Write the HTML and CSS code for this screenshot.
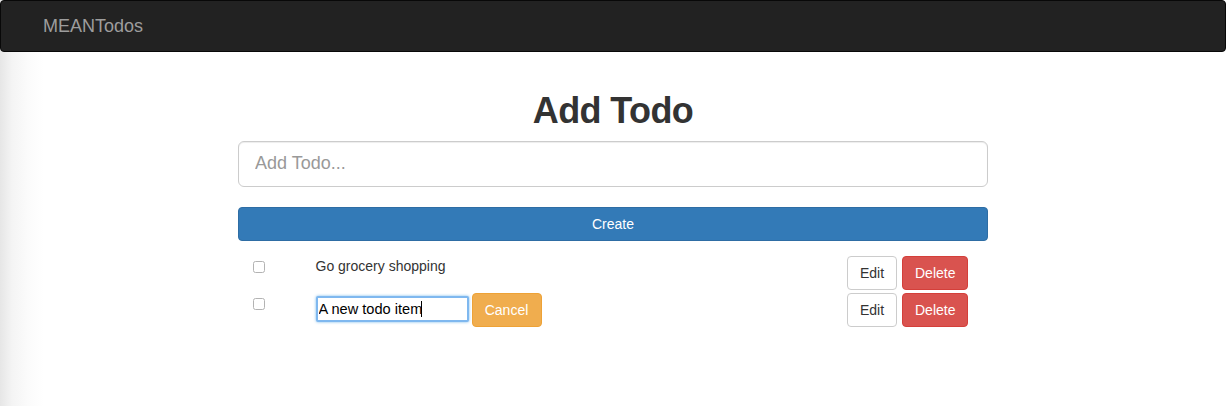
FILE: index.html
```html
<!DOCTYPE html>
<html lang="en">
<head>
<meta charset="utf-8">
<title>MEANTodos</title>
<link rel="stylesheet" href="styles.css">
</head>
<body>
<nav class="navbar">
  <a class="brand" href="#">MEANTodos</a>
</nav>
<main class="container">
  <h1 class="title">Add Todo</h1>
  <input class="input-lg" type="text" placeholder="Add Todo...">
  <button class="btn btn-primary btn-block">Create</button>
  <div class="todos">
    <div class="todo-row">
      <div class="col-check"><input class="check" type="checkbox"></div>
      <div class="col-text"><span class="todo-text">Go grocery shopping</span></div>
      <div class="col-actions">
        <button class="btn btn-default">Edit</button>
        <button class="btn btn-danger">Delete</button>
      </div>
    </div>
    <div class="todo-row">
      <div class="col-check"><input class="check" type="checkbox"></div>
      <div class="col-text">
        <span class="edit-wrap"><input class="edit-input" type="text" value="A new todo item"><span class="caret"></span></span>
        <button class="btn btn-warning">Cancel</button>
      </div>
      <div class="col-actions">
        <button class="btn btn-default">Edit</button>
        <button class="btn btn-danger">Delete</button>
      </div>
    </div>
  </div>
</main>
</body>
</html>
```

FILE: styles.css
```css
* { box-sizing: border-box; }

html, body { height: 100%; }

body {
  margin: 0;
  font-family: "Liberation Sans", Arial, sans-serif;
  font-size: 14px;
  line-height: 20px;
  color: #333;
  background: linear-gradient(to right, #e6e6e6 0px, #f4f4f4 12px, #fbfbfb 28px, #ffffff 44px);
}

.navbar {
  width: calc(100% - 1px);
  height: 52px;
  background: #222;
  border: 1px solid #080808;
  border-radius: 4px;
  display: flex;
  align-items: center;
}

.brand {
  padding-left: 42px;
  font-size: 18px;
  line-height: 50px;
  color: #9d9d9d;
  text-decoration: none;
}

.container {
  width: 751px;
  padding-right: 1px;
  margin: 0 auto;
}

.title {
  margin: 39px 0 10px;
  font-size: 36px;
  line-height: 39.6px;
  font-weight: 700;
  letter-spacing: -0.6px;
  text-align: center;
  color: #333;
}

.input-lg {
  display: block;
  width: 100%;
  height: 46px;
  padding: 10px 16px;
  font-family: inherit;
  font-size: 18px;
  color: #555;
  border: 1px solid #ccc;
  border-radius: 6px;
  box-shadow: inset 0 1px 1px rgba(0,0,0,.075);
  margin-bottom: 20px;
}

.input-lg::placeholder { color: #999; }

.btn {
  display: inline-block;
  height: 34px;
  padding: 6px 12px;
  font-family: inherit;
  font-size: 14px;
  line-height: 20px;
  border: 1px solid transparent;
  border-radius: 4px;
  cursor: pointer;
}

.btn-block { display: block; width: 100%; }

.btn-primary { background: #337ab7; border-color: #2e6da4; color: #fff; }
.btn-default { background: #fff; border-color: #ccc; color: #333; }
.btn-danger { background: #d9534f; border-color: #d43f3a; color: #fff; }
.btn-warning { background: #f0ad4e; border-color: #eea236; color: #fff; }

.todos {
  margin-top: 15px;
  display: flex;
  flex-direction: column;
  gap: 3px;
}

.todo-row {
  display: flex;
  align-items: flex-start;
}

.col-check {
  width: 62.5px;
  padding-left: 15px;
  flex: none;
}

.check {
  appearance: none;
  -webkit-appearance: none;
  display: block;
  width: 12px;
  height: 12px;
  margin: 5px 0 0;
  border: 1px solid #b3b3b3;
  border-radius: 2.5px;
  background: #fff;
}

.col-text {
  flex: 1;
  padding-left: 15px;
  display: flex;
  align-items: flex-start;
}

.todo-text { line-height: 20px; }

.edit-wrap {
  position: relative;
  margin-top: 3px;
}

.edit-input {
  display: block;
  width: 153px;
  height: 26px;
  padding: 1px 1px;
  font-family: inherit;
  font-size: 14.6px;
  color: #000;
  border: 2px solid #7fb8ef;
  border-radius: 2px;
  box-shadow: 0 0 3px rgba(102,175,233,.9);
  outline: none;
}

.caret {
  position: absolute;
  left: 105px;
  top: 5px;
  width: 1px;
  height: 16px;
  background: #000;
}

.btn-warning {
  margin-left: 3px;
  width: 70px;
}

.col-actions {
  flex: none;
  display: flex;
  gap: 5px;
  padding-right: 20px;
}

.btn-default { width: 50px; }
.btn-danger { width: 66px; }
```
